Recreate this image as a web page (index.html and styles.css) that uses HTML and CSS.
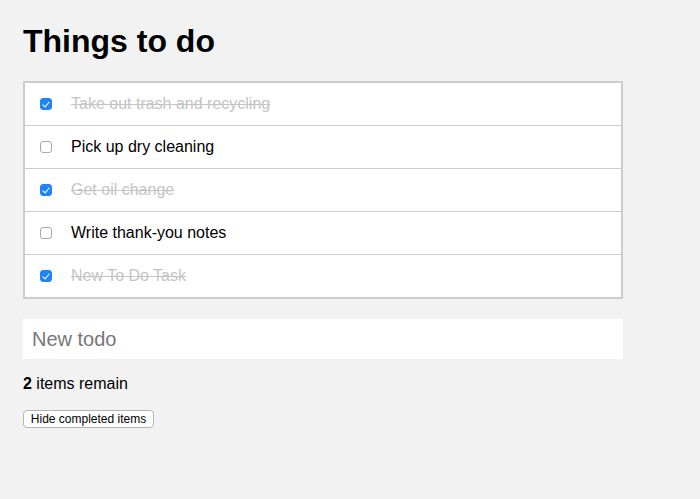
FILE: index.html
```html
<!DOCTYPE html>
<html lang="en">
<head>
<meta charset="utf-8">
<title>Things to do</title>
<link rel="stylesheet" href="styles.css">
</head>
<body>
<main class="app">
  <h1 class="title">Things to do</h1>
  <ul class="todo-list">
    <li class="todo done"><input type="checkbox" class="check" checked><span class="label">Take out trash and recycling</span></li>
    <li class="todo"><input type="checkbox" class="check"><span class="label">Pick up dry cleaning</span></li>
    <li class="todo done"><input type="checkbox" class="check" checked><span class="label">Get oil change</span></li>
    <li class="todo"><input type="checkbox" class="check"><span class="label">Write thank-you notes</span></li>
    <li class="todo done"><input type="checkbox" class="check" checked><span class="label">New To Do Task</span></li>
  </ul>
  <input type="text" class="new-todo" placeholder="New todo">
  <p class="remaining"><strong>2</strong> items remain</p>
  <button class="hide-btn" type="button">Hide completed items</button>
</main>
</body>
</html>
```
FILE: styles.css
```css
html, body {
  margin: 0;
  padding: 0;
  background: #f2f2f2;
}
body {
  font-family: "Liberation Sans", Arial, Helvetica, sans-serif;
  color: #000;
}
.app {
  width: 600px;
  padding: 0 23px;
}
.title {
  margin: 23px 0 21px;
  font-size: 32px;
  font-weight: bold;
  line-height: 37px;
}
.todo-list {
  list-style: none;
  margin: 0;
  padding: 0;
  border: 2px solid #cccccc;
  background: #fff;
}
.todo {
  display: flex;
  align-items: center;
  height: 42px;
  padding-left: 15px;
  border-top: 1px solid #cccccc;
  font-size: 16px;
}
.todo:first-child {
  border-top: none;
}
.check {
  appearance: none;
  -webkit-appearance: none;
  box-sizing: border-box;
  width: 12px;
  height: 12px;
  margin: 0 19px 0 0;
  border: 1px solid #a8a8a8;
  border-radius: 3px;
  background: #fff;
  position: relative;
}
.check:checked {
  border-color: #1f84f4;
  background: #1f84f4;
}
.check:checked::after {
  content: "";
  position: absolute;
  left: 3px;
  top: 1px;
  width: 3px;
  height: 6px;
  border: solid #fff;
  border-width: 0 1.6px 1.6px 0;
  transform: rotate(40deg);
}
.label {
  line-height: 18px;
}
.done .label {
  color: #c4c4c4;
  text-decoration: line-through;
}
.new-todo {
  display: block;
  box-sizing: border-box;
  width: 600px;
  height: 40px;
  margin: 20px 0 0;
  padding: 0 9px;
  border: none;
  background: #fff;
  font-family: "Liberation Sans", Arial, sans-serif;
  font-size: 20px;
  outline: none;
}
.new-todo::placeholder {
  color: #777;
}
.remaining {
  margin: 16px 0 0;
  font-size: 16px;
  line-height: 18px;
}
.hide-btn {
  display: block;
  margin-top: 17px;
  height: 18px;
  width: 131px;
  padding: 0;
  border: 1px solid #b5b5b5;
  border-radius: 4px;
  background: #fff;
  font-family: "Liberation Sans", Arial, sans-serif;
  font-size: 12px;
  line-height: 16px;
  color: #000;
}
```
